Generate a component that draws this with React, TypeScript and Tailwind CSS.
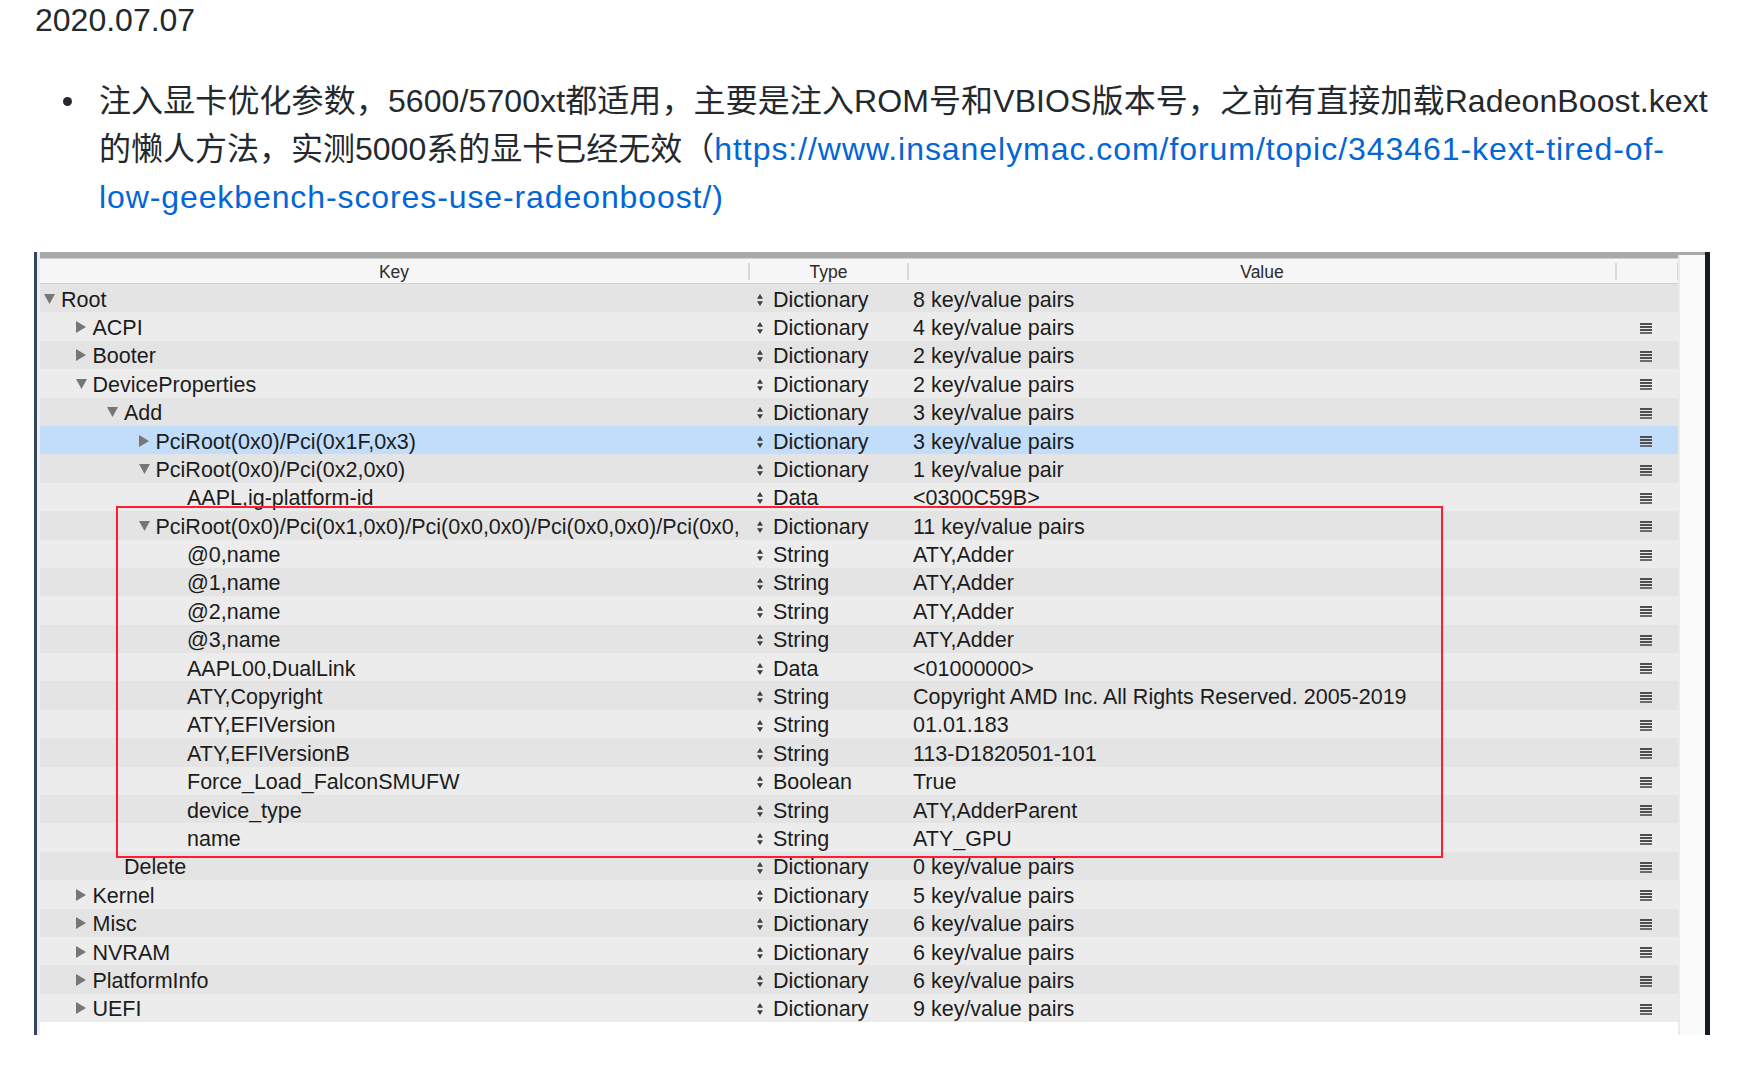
import React from "react";

type Row = {
  key: string;
  level: number;
  tri: "down" | "right" | "none";
  type: string;
  value: string;
  menu?: boolean;
  selected?: boolean;
};

const rows: Row[] = [
  { key: "Root", level: 0, tri: "down", type: "Dictionary", value: "8 key/value pairs", menu: false },
  { key: "ACPI", level: 1, tri: "right", type: "Dictionary", value: "4 key/value pairs" },
  { key: "Booter", level: 1, tri: "right", type: "Dictionary", value: "2 key/value pairs" },
  { key: "DeviceProperties", level: 1, tri: "down", type: "Dictionary", value: "2 key/value pairs" },
  { key: "Add", level: 2, tri: "down", type: "Dictionary", value: "3 key/value pairs" },
  { key: "PciRoot(0x0)/Pci(0x1F,0x3)", level: 3, tri: "right", type: "Dictionary", value: "3 key/value pairs", selected: true },
  { key: "PciRoot(0x0)/Pci(0x2,0x0)", level: 3, tri: "down", type: "Dictionary", value: "1 key/value pair" },
  { key: "AAPL,ig-platform-id", level: 4, tri: "none", type: "Data", value: "<0300C59B>" },
  { key: "PciRoot(0x0)/Pci(0x1,0x0)/Pci(0x0,0x0)/Pci(0x0,0x0)/Pci(0x0,", level: 3, tri: "down", type: "Dictionary", value: "11 key/value pairs" },
  { key: "@0,name", level: 4, tri: "none", type: "String", value: "ATY,Adder" },
  { key: "@1,name", level: 4, tri: "none", type: "String", value: "ATY,Adder" },
  { key: "@2,name", level: 4, tri: "none", type: "String", value: "ATY,Adder" },
  { key: "@3,name", level: 4, tri: "none", type: "String", value: "ATY,Adder" },
  { key: "AAPL00,DualLink", level: 4, tri: "none", type: "Data", value: "<01000000>" },
  { key: "ATY,Copyright", level: 4, tri: "none", type: "String", value: "Copyright AMD Inc. All Rights Reserved. 2005-2019" },
  { key: "ATY,EFIVersion", level: 4, tri: "none", type: "String", value: "01.01.183" },
  { key: "ATY,EFIVersionB", level: 4, tri: "none", type: "String", value: "113-D1820501-101" },
  { key: "Force_Load_FalconSMUFW", level: 4, tri: "none", type: "Boolean", value: "True" },
  { key: "device_type", level: 4, tri: "none", type: "String", value: "ATY,AdderParent" },
  { key: "name", level: 4, tri: "none", type: "String", value: "ATY_GPU" },
  { key: "Delete", level: 2, tri: "none", type: "Dictionary", value: "0 key/value pairs" },
  { key: "Kernel", level: 1, tri: "right", type: "Dictionary", value: "5 key/value pairs" },
  { key: "Misc", level: 1, tri: "right", type: "Dictionary", value: "6 key/value pairs" },
  { key: "NVRAM", level: 1, tri: "right", type: "Dictionary", value: "6 key/value pairs" },
  { key: "PlatformInfo", level: 1, tri: "right", type: "Dictionary", value: "6 key/value pairs" },
  { key: "UEFI", level: 1, tri: "right", type: "Dictionary", value: "9 key/value pairs" },
];

const indent: Record<number, string> = {
  0: "pl-[4px]",
  1: "pl-[35.5px]",
  2: "pl-[67px]",
  3: "pl-[98.5px]",
  4: "pl-[130px]",
};

function Triangle({ dir }: { dir: "down" | "right" | "none" }) {
  return (
    <span className="w-[11px] h-[12px] mr-[6px] shrink-0 flex items-center justify-center -translate-y-[1px]">
      {dir === "right" && (
        <svg width="10" height="12" viewBox="0 0 10 12">
          <path d="M0 0 L10 6 L0 12 Z" fill="#767676" />
        </svg>
      )}
      {dir === "down" && (
        <svg width="11" height="10" viewBox="0 0 11 10">
          <path d="M0 0 L11 0 L5.5 10 Z" fill="#767676" />
        </svg>
      )}
    </span>
  );
}

function UpDown() {
  return (
    <svg width="6" height="12" viewBox="0 0 6 12" className="shrink-0">
      <path d="M3 0 L6 4.8 L0 4.8 Z" fill="#3c3c3c" />
      <path d="M0 7.2 L6 7.2 L3 12 Z" fill="#3c3c3c" />
    </svg>
  );
}

function MenuIcon() {
  return (
    <svg width="12" height="11" viewBox="0 0 12 11">
      <rect x="0" y="0" width="12" height="2" fill="#4f4f4f" />
      <rect x="0" y="3" width="12" height="2" fill="#4f4f4f" />
      <rect x="0" y="6" width="12" height="2" fill="#4f4f4f" />
      <rect x="0" y="9" width="12" height="2" fill="#6a6a6a" />
    </svg>
  );
}

function PlistTable() {
  return (
    <div className="relative ml-[34px] w-[1676px] h-[783px] flex font-['Liberation_Sans',sans-serif]">
      <div className="w-[3px] h-full bg-[#34465e]" />
      <div className="w-[3px] h-full bg-[#eeeeee]" />
      <div className="w-[1638px] h-full flex flex-col bg-white">
        <div className="h-[6px] bg-[#a9a9a9] shrink-0" />
        <div className="h-[1px] bg-[#cfcfcf] shrink-0" />
        <div className="h-[25px] shrink-0 bg-[#f6f6f6] border-b border-[#d2d2d2] flex items-center text-[17.5px] text-[#2a2a2a]">
          <div className="w-[708px] h-full flex items-center justify-center pt-[3px]">Key</div>
          <div className="w-[2px] h-[17px] bg-[#d9d9d9]" />
          <div className="w-[157px] h-full flex items-center justify-center pt-[3px]">Type</div>
          <div className="w-[2px] h-[17px] bg-[#d9d9d9]" />
          <div className="w-[706px] h-full flex items-center justify-center pt-[3px]">Value</div>
          <div className="w-[2px] h-[17px] bg-[#d9d9d9]" />
          <div className="w-[60px] h-full" />
          <div className="w-[1px] h-[17px] bg-[#d9d9d9]" />
        </div>
        <div className="flex flex-col">
          {rows.map((r, i) => {
            const bg = r.selected
              ? "bg-[#c1ddf9]"
              : i % 2 === 0
              ? "bg-[#e4e4e4]"
              : "bg-[#ececec]";
            return (
              <div
                key={i}
                className={`h-[28.4px] flex items-center text-[21.5px] text-[#1c1c1c] whitespace-nowrap ${bg}`}
              >
                <div className={`w-[712px] h-full flex items-center overflow-hidden pt-[3px] ${indent[r.level]}`}>
                  <Triangle dir={r.tri} />
                  <span>{r.key}</span>
                </div>
                <div className="w-[155px] h-full flex items-center pl-[5px] gap-[10px] overflow-hidden pt-[3px]">
                  <UpDown />
                  <span>{r.type}</span>
                </div>
                <div className="w-[708px] h-full flex items-center pl-[6px] overflow-hidden pt-[3px]">
                  {r.value}
                </div>
                <div className="w-[63px] h-full flex items-center pl-[25px] pt-[3px]">
                  {r.menu !== false && <MenuIcon />}
                </div>
              </div>
            );
          })}
        </div>
      </div>
      <div className="w-[27px] h-full flex flex-col">
        <div className="h-[3px] bg-[#a9a9a9]" />
        <div className="flex-1 bg-[#fafafa] border-l-2 border-[#ebebeb]" />
      </div>
      <div className="w-[5px] h-full bg-[#161c26]" />
      <div className="absolute left-[82px] top-[254px] w-[1327px] h-[352px] border-2 border-[#ff1b30] pointer-events-none" />
    </div>
  );
}

export default function App() {
  return (
    <div className="w-[1764px] h-[1068px] bg-white overflow-hidden text-[#24292e] font-['Liberation_Sans','Noto_Sans_CJK_SC',sans-serif]">
      <div className="-mt-[4px] ml-[35px] h-[48px] leading-[48px] text-[32px]">2020.07.07</div>
      <ul className="mt-[33px] ml-[63px]">
        <li className="flex text-[32px] leading-[48px]">
          <div className="h-[48px] flex items-center w-[36px] shrink-0">
            <span className="w-[9px] h-[9px] rounded-full bg-[#24292e]" />
          </div>
          <div className="whitespace-nowrap">
            <div className="tracking-[0.1px]">注入显卡优化参数，5600/5700xt都适用，主要是注入ROM号和VBIOS版本号，之前有直接加载RadeonBoost.kext</div>
            <div>
              的懒人方法，实测5000系的显卡已经无效（
              <a className="text-[#0366d6] tracking-[0.95px]" href="#">
                https://www.insanelymac.com/forum/topic/343461-kext-tired-of-
              </a>
            </div>
            <div>
              <a className="text-[#0366d6] tracking-[0.9px]" href="#">low-geekbench-scores-use-radeonboost/)</a>
            </div>
          </div>
        </li>
      </ul>
      <div className="mt-[31px]">
        <PlistTable />
      </div>
    </div>
  );
}
